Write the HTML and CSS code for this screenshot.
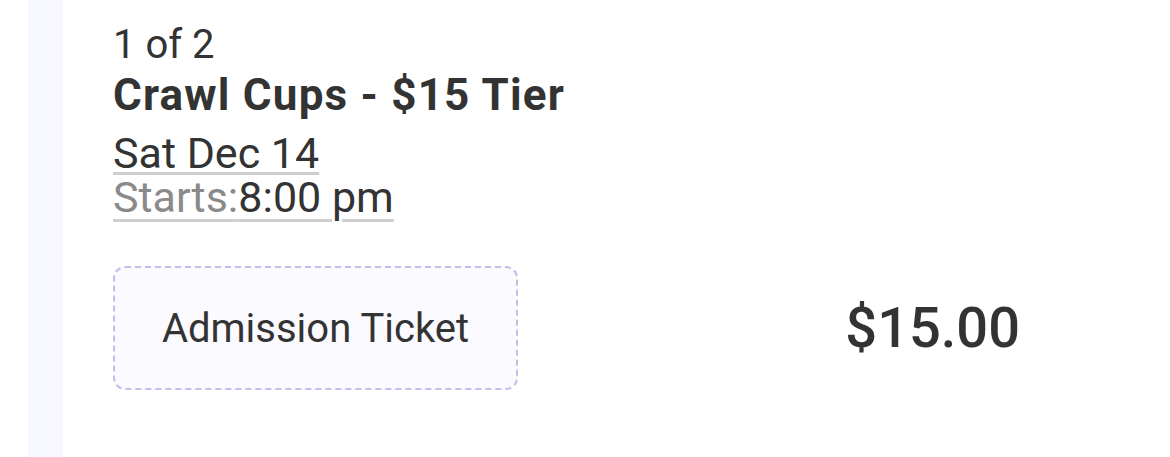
FILE: index.html
```html
<!DOCTYPE html>
<html lang="en">
<head>
  <meta charset="UTF-8" />
  <meta name="viewport" content="width=device-width, initial-scale=1.0"/>
  <title>Ticket</title>
  <link rel="stylesheet" href="styles.css">
</head>
<body>
  <div class="page">
    <div class="side-strip"></div>
    <div class="ticket">
      <div class="ticket-count">1 of 2</div>
      <div class="ticket-title">Crawl Cups - $15 Tier</div>
      <div class="ticket-date"><span class="date-link">Sat Dec 14</span></div>
      <div class="ticket-time"><span class="time-link"><span class="time-label">Starts:</span>8:00 pm</span></div>

      <div class="ticket-row">
        <div class="ticket-type">Admission Ticket</div>
        <div class="ticket-price">$15.00</div>
      </div>
    </div>
  </div>
</body>
</html>
```

FILE: styles.css
```css
body {
  margin: 0;
  font-family: 'Roboto', 'Liberation Sans', sans-serif;
  color: #333;
  background-color: #fff;
}

.page {
  display: flex;
  height: 457px;
  padding-left: 28px;
}

.side-strip {
  width: 35px;
  background-color: #f7f7ff;
}

.ticket {
  flex: 1;
  padding: 21px 150px 0 50px;
}

.ticket-count {
  font-size: 40px;
  line-height: 48px;
}

.ticket-title {
  font-size: 44px;
  font-weight: bold;
  line-height: 52px;
  letter-spacing: 1.2px;
}

.ticket-date,
.ticket-time {
  font-size: 43px;
  line-height: 44px;
  height: 44px;
}

.ticket-date {
  margin-top: 10px;
}

.date-link,
.time-link {
  display: inline-block;
  height: 44px;
  vertical-align: top;
  text-decoration: underline;
  text-decoration-color: #cfcfcf;
  text-decoration-thickness: 3px;
}

.date-link {
  text-underline-offset: 4px;
}

.time-link {
  text-underline-offset: 7px;
}

.time-label {
  color: #8a8a8a;
}

.ticket-row {
  display: flex;
  align-items: center;
  justify-content: space-between;
  margin-top: 47px;
}

.ticket-type {
  box-sizing: border-box;
  width: 405px;
  height: 124px;
  display: flex;
  align-items: center;
  justify-content: center;
  font-size: 40px;
  border: 2px dashed #c6bdea;
  border-radius: 12px;
  background-color: #fbfaff;
}

.ticket-price {
  font-size: 56px;
  font-weight: 500;
}
```
